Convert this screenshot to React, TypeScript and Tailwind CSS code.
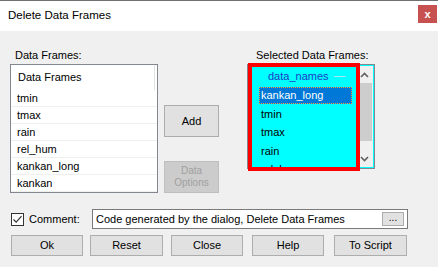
import React from "react";

const FONT = { fontFamily: '"Liberation Sans", Arial, sans-serif' };

const leftItems = ["tmin", "tmax", "rain", "rel_hum", "kankan_long", "kankan"];
const rightItems = ["tmin", "tmax", "rain", "rel_hum"];

function Btn({ label, className = "" }: { label: string; className?: string }) {
  return (
    <div
      className={`flex h-[21px] items-center justify-center border border-[#adadad] bg-[#e1e1e1] text-[11px] text-black ${className}`}
    >
      {label}
    </div>
  );
}

function Chevron({ up }: { up?: boolean }) {
  return (
    <svg width="9" height="6" viewBox="0 0 9 6">
      <path
        d={up ? "M1 5 L4.5 1.5 L8 5" : "M1 1 L4.5 4.5 L8 1"}
        fill="none"
        stroke="#606060"
        strokeWidth="1.6"
      />
    </svg>
  );
}

export default function App() {
  return (
    <div className="h-[267px] w-[438px] overflow-hidden bg-[#f0f0f0]" style={FONT}>
      {/* Title bar */}
      <div className="flex h-[31px] items-center justify-between border-t border-[#707070] bg-white pl-[8px] pr-[1px]">
        <span className="text-[11.5px] text-black">Delete Data Frames</span>
        <div className="mb-[4px] flex h-[18px] w-[19px] items-center justify-center bg-[#c75050] text-[11px] font-bold leading-none text-white">
          x
        </div>
      </div>

      {/* Body */}
      <div className="flex flex-col">
        <div className="flex pt-[15px]">
          {/* Left list */}
          <div className="ml-[10px] flex w-[148px] flex-col">
            <div className="h-[18px] pl-[5px] text-[11px] leading-[18px] text-black">Data Frames:</div>
            <div className="flex h-[129px] flex-col border border-[#828790] bg-white text-[11px] text-black">
              <div className="flex h-[25px] items-stretch">
                <div className="flex flex-1 items-center pl-[7px]">Data Frames</div>
                <div className="mr-[2px] w-[1px] bg-[#e3e3e3]" />
              </div>
              {leftItems.map((it) => (
                <div key={it} className="h-[17px] border-b border-[#efefef] pl-[6px] leading-[16px]">
                  {it}
                </div>
              ))}
            </div>
          </div>

          {/* Middle buttons */}
          <div className="ml-[6px] flex w-[55px] flex-col pt-[59px]">
            <Btn label="Add" className="h-[32px]" />
            <div className="mt-[24px] flex h-[32px] flex-col items-center justify-center border border-[#bfbfbf] bg-[#cccccc] text-[10px] leading-[12px] text-[#a0a0a0]">
              <span>Data</span>
              <span>Options</span>
            </div>
          </div>

          {/* Right list */}
          <div className="ml-[28px] flex flex-col">
            <div className="h-[18px] pl-[9px] text-[11px] leading-[18px] text-black">Selected Data Frames:</div>
            <div className="relative h-[105px] w-[128px] border border-[#828790] bg-[#00ffff] p-[1px]">
              <div className="flex h-full">
                <div className="flex w-[107px] flex-col overflow-hidden text-[11px] text-black">
                  <div className="flex h-[20px] shrink-0 items-center pl-[19px]">
                    <span className="text-[#1e3cc8]">data_names</span>
                    <span className="ml-[5px] h-[1px] w-[12px] bg-[#a8e8f0]" />
                  </div>
                  {["kankan_long", ...rightItems].map((it, i) => (
                    <div key={it} className="flex h-[18.5px] shrink-0 items-center pl-[10px] pr-[4px]">
                      {i === 0 ? (
                        <div className="flex h-[16.5px] w-full items-center border border-dotted border-[#f0a040] bg-[#0078d7] pl-[1px] text-white">
                          {it}
                        </div>
                      ) : (
                        <span className="pl-[2px]">{it}</span>
                      )}
                    </div>
                  ))}
                </div>
                {/* Scrollbar */}
                <div className="flex w-[17px] flex-col bg-[#f0f0f0]">
                  <div className="flex h-[17px] items-center justify-center">
                    <Chevron up />
                  </div>
                  <div className="mx-[1px] h-[58px] bg-[#cdcdcd]" />
                  <div className="flex-1" />
                  <div className="flex h-[17px] items-center justify-center">
                    <Chevron />
                  </div>
                </div>
              </div>
              {/* Red highlight overlay */}
              <div className="pointer-events-none absolute left-[0px] top-[-2px] h-[108px] w-[112px] border-[4px] border-[#ff0000]" />
            </div>
          </div>
        </div>

        {/* Comment row */}
        <div className="mt-[16px] flex h-[20px] items-center">
          <div className="ml-[11px] flex h-[13px] w-[13px] items-center justify-center border border-[#333333] bg-white">
            <svg width="11" height="11" viewBox="0 0 11 11">
              <path d="M1.5 5.5 L4.2 8.2 L9.5 2.2" fill="none" stroke="#333333" strokeWidth="1.2" />
            </svg>
          </div>
          <span className="ml-[5px] w-[63px] text-[11px] text-black">Comment:</span>
          <div className="flex h-[20px] w-[316px] items-center justify-between border border-[#7a7a7a] bg-white pl-[3px] pr-[3px] text-[11px] text-black">
            <span>Code generated by the dialog, Delete Data Frames</span>
            <div className="flex h-[14px] w-[22px] items-center justify-center border border-[#adadad] bg-[#e1e1e1] pb-[3px] text-[10px] leading-none">
              ...
            </div>
          </div>
        </div>

        {/* Buttons */}
        <div className="mt-[6px] flex">
          <Btn label="Ok" className="ml-[11px] w-[72px]" />
          <Btn label="Reset" className="ml-[7px] w-[73px]" />
          <Btn label="Close" className="ml-[8px] w-[72px]" />
          <Btn label="Help" className="ml-[9px] w-[72px]" />
          <Btn label="To Script" className="ml-[10px] w-[73px]" />
        </div>
      </div>
    </div>
  );
}
